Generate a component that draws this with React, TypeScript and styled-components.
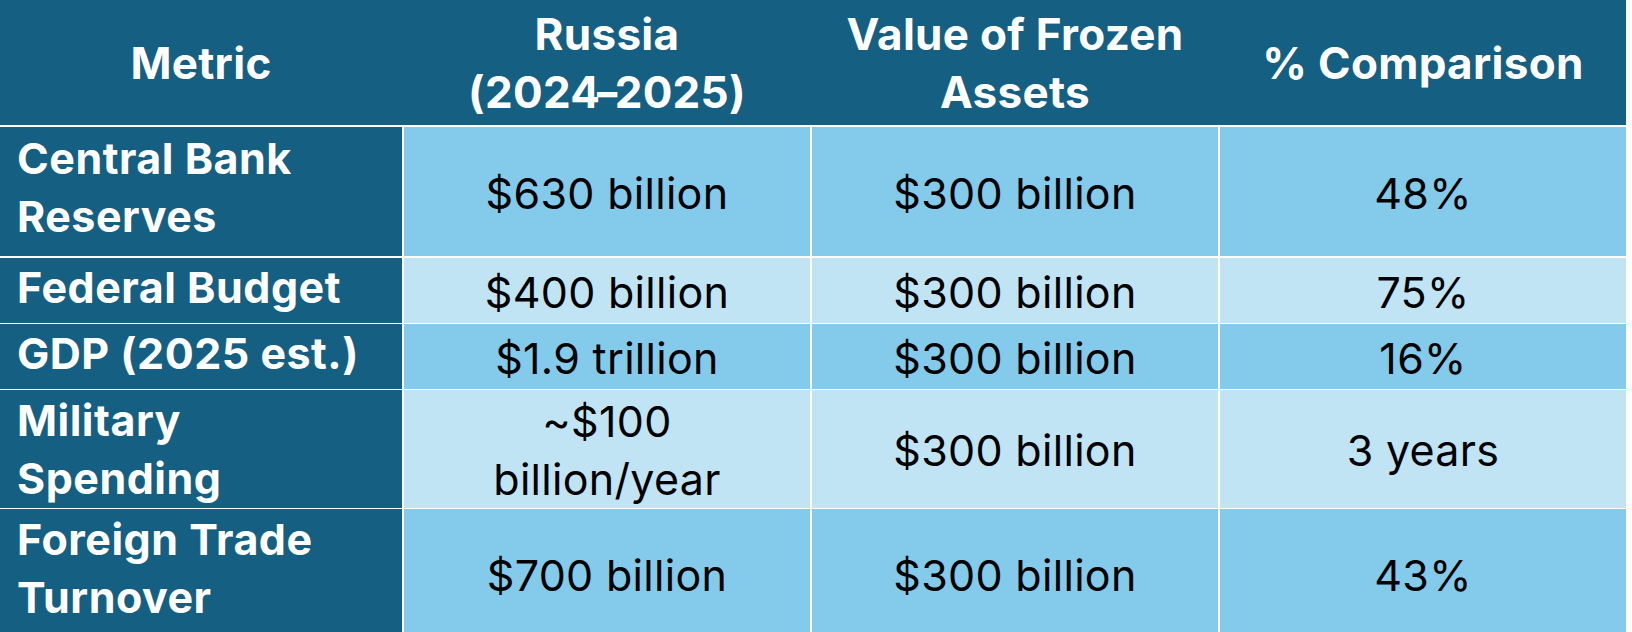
import React from "react";
import styled, { createGlobalStyle } from "styled-components";

const GlobalStyle = createGlobalStyle`
  html, body {
    margin: 0;
    padding: 0;
    background: #ffffff;
  }
  body {
    font-family: Inter, "Noto Sans", Arial, sans-serif;
    -webkit-font-smoothing: antialiased;
  }
`;

const DARK = "#156082";
const MID = "#83CAEB";
const LIGHT = "#C1E4F5";
const COLS = "402px 406px 406px 406px";

const Frame = styled.div`
  width: 1632px;
  height: 632px;
  overflow: hidden;
  background: #ffffff;
`;

const Table = styled.div`
  width: 1626px;
  display: flex;
  flex-direction: column;
  gap: 2px;
  background: #ffffff;
`;

const HeaderRow = styled.div`
  display: grid;
  grid-template-columns: ${COLS};
  column-gap: 2px;
  height: 125px;
  background: ${DARK};
`;

const HeaderCell = styled.div`
  display: flex;
  align-items: center;
  justify-content: center;
  text-align: center;
  color: #ffffff;
  font-family: Inter, "Noto Sans", Arial, sans-serif;
  font-weight: 700;
  font-size: 44px;
  line-height: 58px;
  letter-spacing: 0.3px;
`;

const Dash = styled.span`
  display: inline-block;
  margin: 0 -4px;
  transform: scaleX(0.92);
`;

const BodyRow = styled.div<{ $h: number }>`
  display: grid;
  grid-template-columns: ${COLS};
  column-gap: 2px;
  height: ${(p) => p.$h}px;
  flex: 0 0 auto;
`;

const MetricCell = styled.div<{ $lift: number }>`
  display: flex;
  align-items: center;
  background: ${DARK};
  color: #ffffff;
  padding: 0 10px ${(p) => p.$lift}px 17px;
  font-family: Inter, "Noto Sans", Arial, sans-serif;
  font-weight: 700;
  font-size: 43px;
  line-height: 58px;
  letter-spacing: 0.5px;
  white-space: nowrap;
`;

const ValueCell = styled.div<{ $bg: string }>`
  display: flex;
  align-items: center;
  justify-content: center;
  text-align: center;
  background: ${(p) => p.$bg};
  color: #000000;
  padding-top: 2px;
  font-family: Inter, "Noto Sans", Arial, sans-serif;
  font-weight: 400;
  font-size: 43px;
  line-height: 58px;
  letter-spacing: 0.3px;
  white-space: nowrap;
`;

const renderLine = (l: string) => {
  const parts = l.split("–");
  if (parts.length === 1) return l;
  return parts.map((p, i) => (
    <React.Fragment key={i}>
      {i > 0 && <Dash>–</Dash>}
      {p}
    </React.Fragment>
  ));
};

const Lines = ({ lines }: { lines: string[] }) => (
  <span>
    {lines.map((l, i) => (
      <React.Fragment key={i}>
        {i > 0 && <br />}
        {renderLine(l)}
      </React.Fragment>
    ))}
  </span>
);

const headers: string[][] = [
  ["Metric"],
  ["Russia", "(2024–2025)"],
  ["Value of Frozen", "Assets"],
  ["% Comparison"],
];

type Row = {
  metric: string[];
  russia: string[];
  frozen: string;
  pct: string;
  h: number;
  bg: string;
  lift: number;
};

const rows: Row[] = [
  { metric: ["Central Bank", "Reserves"], russia: ["$630 billion"], frozen: "$300 billion", pct: "48%", h: 129, bg: MID, lift: 9 },
  { metric: ["Federal Budget"], russia: ["$400 billion"], frozen: "$300 billion", pct: "75%", h: 64, bg: LIGHT, lift: 7 },
  { metric: ["GDP (2025 est.)"], russia: ["$1.9 trillion"], frozen: "$300 billion", pct: "16%", h: 64, bg: MID, lift: 7 },
  { metric: ["Military", "Spending"], russia: ["~$100", "billion/year"], frozen: "$300 billion", pct: "3 years", h: 117, bg: LIGHT, lift: 1 },
  { metric: ["Foreign Trade", "Turnover"], russia: ["$700 billion"], frozen: "$300 billion", pct: "43%", h: 129, bg: MID, lift: 12 },
];

export default function App() {
  return (
    <>
      <GlobalStyle />
      <Frame>
        <Table>
          <HeaderRow>
            {headers.map((h, i) => (
              <HeaderCell key={i}>
                <Lines lines={h} />
              </HeaderCell>
            ))}
          </HeaderRow>
          {rows.map((r, i) => (
            <BodyRow key={i} $h={r.h}>
              <MetricCell $lift={r.lift}>
                <Lines lines={r.metric} />
              </MetricCell>
              <ValueCell $bg={r.bg}>
                <Lines lines={r.russia} />
              </ValueCell>
              <ValueCell $bg={r.bg}>{r.frozen}</ValueCell>
              <ValueCell $bg={r.bg}>{r.pct}</ValueCell>
            </BodyRow>
          ))}
        </Table>
      </Frame>
    </>
  );
}
